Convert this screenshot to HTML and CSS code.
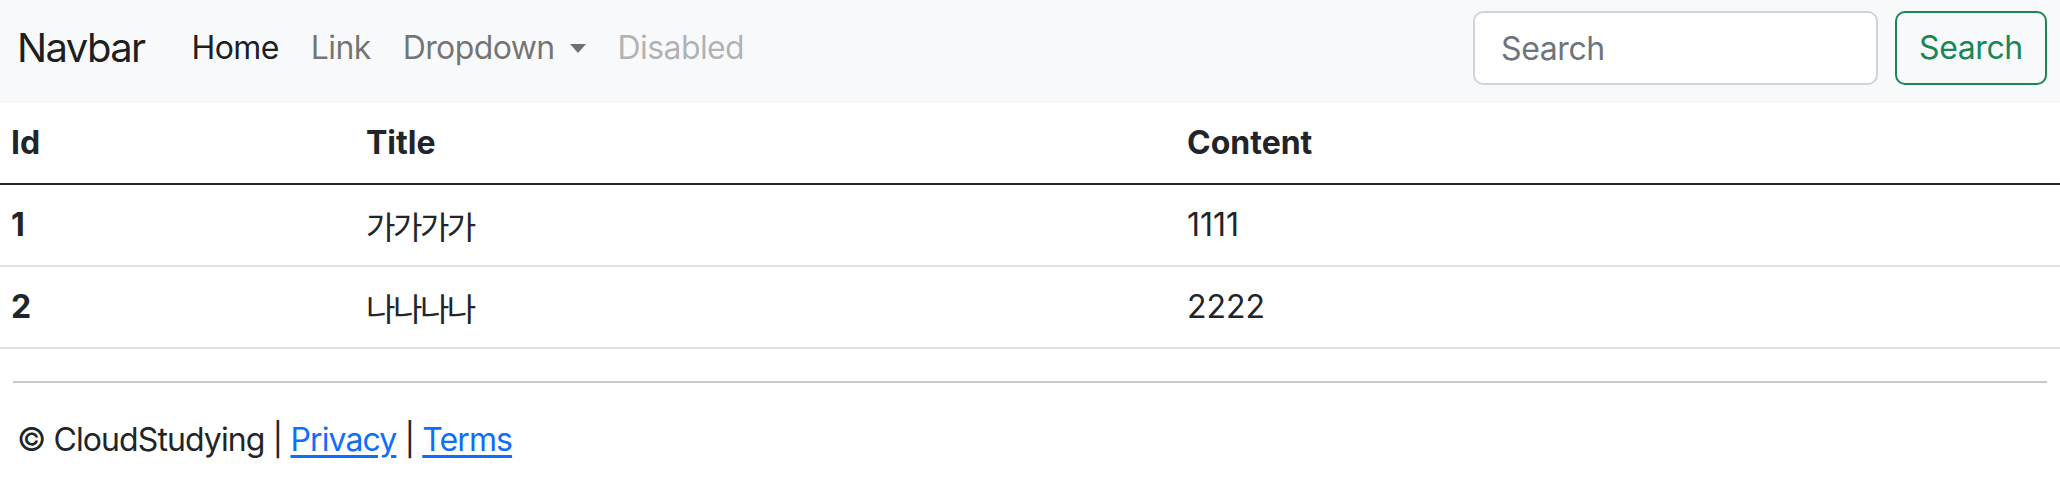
FILE: index.html
```html
<!DOCTYPE html>
<html lang="ko">
<head>
<meta charset="utf-8">
<title>Navbar</title>
<link rel="stylesheet" href="styles.css">
</head>
<body>
<nav class="navbar">
  <a class="brand" href="#">Navbar</a>
  <ul class="nav">
    <li><a class="nav-link active" href="#">Home</a></li>
    <li><a class="nav-link" href="#">Link</a></li>
    <li><a class="nav-link dropdown" href="#">Dropdown<span class="caret"></span></a></li>
    <li><a class="nav-link disabled" href="#">Disabled</a></li>
  </ul>
  <form class="search">
    <input class="search-input" type="search" placeholder="Search">
    <button class="search-btn" type="button">Search</button>
  </form>
</nav>
<table class="table">
  <thead>
    <tr>
      <th class="c1">Id</th>
      <th class="c2">Title</th>
      <th class="c3">Content</th>
    </tr>
  </thead>
  <tbody>
    <tr>
      <th class="c1">1</th>
      <td class="c2"><span class="ko">가가가가</span></td>
      <td class="c3">1111</td>
    </tr>
    <tr>
      <th class="c1">2</th>
      <td class="c2"><span class="ko">나나나나</span></td>
      <td class="c3">2222</td>
    </tr>
  </tbody>
</table>
<footer class="footer">
  <hr class="rule">
  <p class="copy">© CloudStudying | <a href="#">Privacy</a> | <a href="#">Terms</a></p>
</footer>
</body>
</html>
```

FILE: styles.css
```css
* { box-sizing: border-box; }
html, body { margin: 0; padding: 0; }
body {
  font-family: Inter, "Noto Sans", "Noto Sans CJK KR", sans-serif;
  font-size: 32px;
  line-height: 48px;
  color: #212529;
  background: #fff;
}
.navbar {
  display: flex;
  align-items: center;
  height: 103px;
  padding: 11px 13px 18px 17px;
  background: #f8f9fa;
}
.brand {
  font-size: 40px;
  line-height: 60px;
  letter-spacing: -1.6px;
  color: rgba(0,0,0,.9);
  text-decoration: none;
  margin-right: 31px;
}
.nav {
  display: flex;
  list-style: none;
  margin: 0;
  padding: 0;
  flex: 1;
}
.nav-link {
  display: flex;
  align-items: center;
  padding: 0 16px;
  letter-spacing: -0.6px;
  color: rgba(0,0,0,.55);
  text-decoration: none;
}
.nav-link.active { color: rgba(0,0,0,.9); }
.nav-link.disabled { color: rgba(0,0,0,.3); }
.caret {
  display: inline-block;
  margin-left: 15px;
  width: 0;
  height: 0;
  border-top: 9px solid rgba(0,0,0,.55);
  border-left: 8px solid transparent;
  border-right: 8px solid transparent;
}
.search {
  display: flex;
  align-items: center;
  gap: 17px;
}
.search-input {
  width: 405px;
  height: 74px;
  padding: 0 26px;
  font: inherit;
  letter-spacing: -0.4px;
  color: #212529;
  background: #fff;
  border: 2px solid #ced4da;
  border-radius: 10px;
  outline: none;
}
.search-input::placeholder { color: #6c757d; }
.search-btn {
  height: 74px;
  width: 152px;
  padding: 0;
  font: inherit;
  letter-spacing: -0.4px;
  color: #198754;
  background: transparent;
  border: 2px solid #198754;
  border-radius: 10px;
}
.table {
  width: 100%;
  border-collapse: collapse;
  table-layout: fixed;
}
.table th, .table td {
  text-align: left;
  vertical-align: middle;
  padding: 16px 11px;
  height: 80px;
  border-bottom: 2px solid #dee2e6;
}
.table th { font-weight: 700; }
.table thead th {
  height: 81px;
  border-bottom: 2px solid #212529;
}
.c1 { width: 355px; }
.c2 { width: 821px; }
.ko {
  font-family: "Noto Sans CJK KR", sans-serif;
  letter-spacing: -2.5px;
  vertical-align: top;
  line-height: 48px;
}
.footer {
  padding: 0 13px;
}
.rule {
  margin: 32px 0 0;
  border: 0;
  border-top: 2px solid #c8c8c8;
}
.copy {
  margin: 33px 0 0 4px;
  letter-spacing: -0.9px;
}
.copy a { color: #0d6efd; text-decoration: underline; text-underline-offset: 4px; }
```
